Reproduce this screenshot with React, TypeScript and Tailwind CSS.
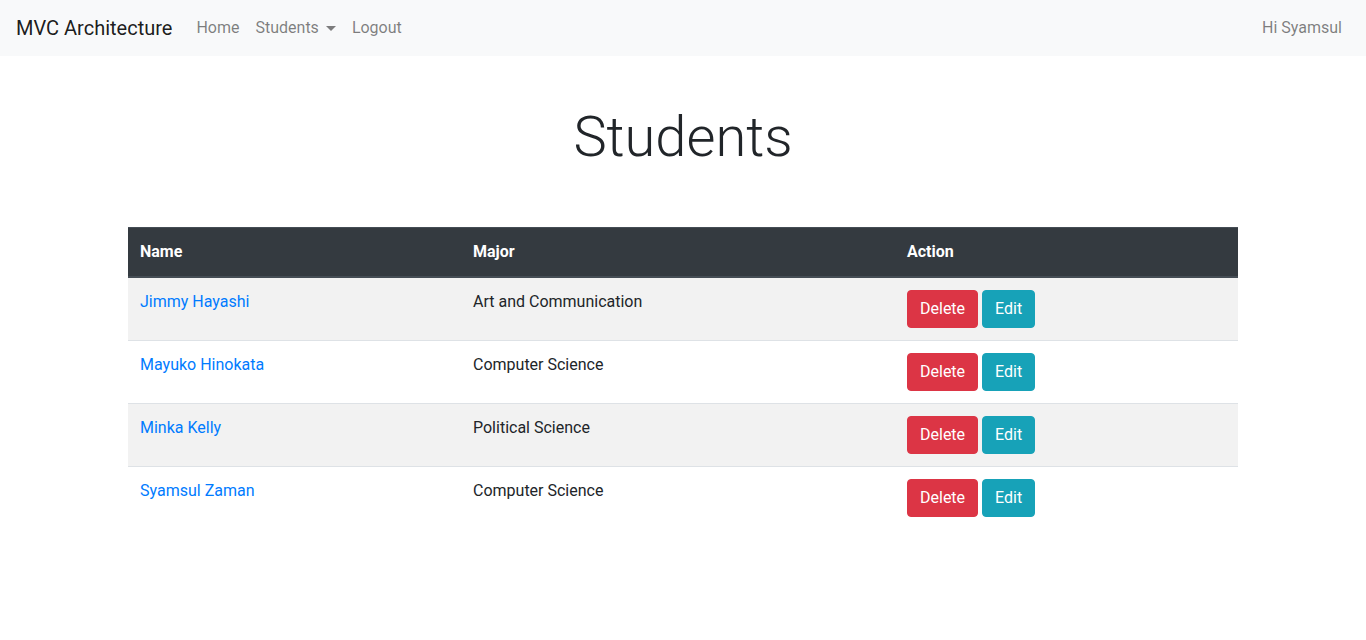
import React from "react";

const students = [
  { name: "Jimmy Hayashi", major: "Art and Communication" },
  { name: "Mayuko Hinokata", major: "Computer Science" },
  { name: "Minka Kelly", major: "Political Science" },
  { name: "Syamsul Zaman", major: "Computer Science" },
];

export default function App() {
  return (
    <div className="min-h-screen bg-white text-[#212529] font-['Roboto',sans-serif] text-base leading-6">
      {/* Navbar */}
      <nav className="flex items-center h-14 px-4 bg-[#f8f9fa]">
        <a className="text-xl leading-[30px] py-[5px] mr-4 text-black/90">MVC Architecture</a>
        <ul className="flex items-center">
          <li>
            <a className="block px-2 py-2 text-black/50">Home</a>
          </li>
          <li>
            <a className="flex items-center px-2 py-2 text-black/50">
              Students
              <span className="ml-[7px] mt-[1px] w-0 h-0 border-x-[5px] border-x-transparent border-t-[5px] border-t-black/50"></span>
            </a>
          </li>
          <li>
            <a className="block px-2 py-2 text-black/50">Logout</a>
          </li>
        </ul>
        <div className="ml-auto">
          <a className="block px-2 py-2 text-black/50">Hi Syamsul</a>
        </div>
      </nav>

      {/* Content */}
      <div className="w-[1110px] mx-auto">
        <h1 className="mt-12 mb-14 h-[67px] text-center text-[56px] leading-[67px] font-light">
          Students
        </h1>

        <table className="w-full border-collapse">
          <thead>
            <tr className="bg-[#343a40] text-white">
              <th className="w-[333px] p-3 text-left font-bold border-t border-b-2 border-[#454d55]">Name</th>
              <th className="w-[434px] p-3 text-left font-bold border-t border-b-2 border-[#454d55]">Major</th>
              <th className="p-3 text-left font-bold border-t border-b-2 border-[#454d55]">Action</th>
            </tr>
          </thead>
          <tbody>
            {students.map((s, i) => (
              <tr key={s.name} className={i % 2 === 0 ? "bg-[#f2f2f2]" : "bg-white"}>
                <td className="p-3 align-top border-t border-[#dee2e6]">
                  <a className="text-[#007bff]">{s.name}</a>
                </td>
                <td className="p-3 align-top border-t border-[#dee2e6]">{s.major}</td>
                <td className="p-3 align-top border-t border-[#dee2e6]">
                  <div className="flex gap-1">
                    <button className="h-[38px] px-3 rounded border border-[#dc3545] bg-[#dc3545] text-white">
                      Delete
                    </button>
                    <button className="h-[38px] px-3 rounded border border-[#17a2b8] bg-[#17a2b8] text-white">
                      Edit
                    </button>
                  </div>
                </td>
              </tr>
            ))}
          </tbody>
        </table>
      </div>
    </div>
  );
}
